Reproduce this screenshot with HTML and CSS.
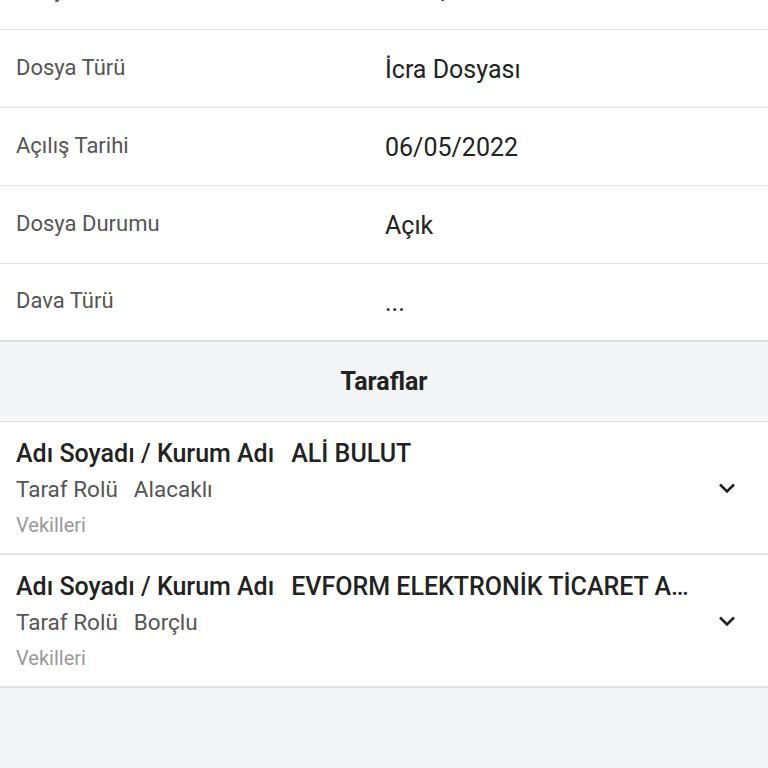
FILE: index.html
```html
<!DOCTYPE html>
<html lang="tr">
<head>
  <meta charset="UTF-8">
  <title>Dosya Detayı</title>
  <meta name="viewport" content="width=device-width,initial-scale=1">
  <link rel="stylesheet" href="styles.css">
</head>
<body>

  <!-- dosya bilgileri -->
  <div class="info-list">
    <div class="info-row">
      <span class="label">Dosya No</span>
      <span class="value">2022/1234</span>
    </div>
    <div class="info-row">
      <span class="label">Dosya Türü</span>
      <span class="value">İcra Dosyası</span>
    </div>
    <div class="info-row">
      <span class="label">Açılış Tarihi</span>
      <span class="value">06/05/2022</span>
    </div>
    <div class="info-row">
      <span class="label">Dosya Durumu</span>
      <span class="value">Açık</span>
    </div>
    <div class="info-row last">
      <span class="label">Dava Türü</span>
      <span class="value">...</span>
    </div>
  </div>

  <!-- taraflar -->
  <div class="section-title">Taraflar</div>

  <div class="party">
    <div class="party-info">
      <div class="party-name"><span>Adı Soyadı / Kurum Adı</span><b>ALİ BULUT</b></div>
      <div class="party-role"><span>Taraf Rolü</span>Alacaklı</div>
      <div class="party-lawyers">Vekilleri</div>
    </div>
    <svg class="chevron" width="24" height="24" viewBox="0 0 24 24"><path d="M5 8.5l7 7 7-7" fill="none" stroke="#222" stroke-width="2.6"/></svg>
  </div>

  <div class="party">
    <div class="party-info">
      <div class="party-name"><span>Adı Soyadı / Kurum Adı</span><b>EVFORM ELEKTRONİK TİCARET ANONİM ŞİRKETİ</b></div>
      <div class="party-role"><span>Taraf Rolü</span>Borçlu</div>
      <div class="party-lawyers">Vekilleri</div>
    </div>
    <svg class="chevron" width="24" height="24" viewBox="0 0 24 24"><path d="M5 8.5l7 7 7-7" fill="none" stroke="#222" stroke-width="2.6"/></svg>
  </div>

</body>
</html>
```

FILE: styles.css
```css
* { box-sizing: border-box; }
html, body {
  margin: 0;
  height: 100%;
}
body {
  font-family: Roboto, 'Noto Sans', sans-serif;
  background: #f4f5f7;
  color: #222;
  overflow: hidden;
}

/* -------- dosya bilgileri -------- */
.info-list {
  background: #fff;
  margin-top: -48px; /* sayfa aşağı kaydırılmış */
}
.info-row {
  display: flex;
  align-items: center;
  height: 78px;
  border-bottom: 1px solid #e3e3e3;
  padding: 0 16px;
}
.info-row.last {
  border-bottom: 2px solid #dcdcdc;
}
.label {
  width: 369px;
  font-size: 22px;
  color: #555;
  margin-bottom: 3px;
}
.value {
  font-size: 25px;
  color: #222;
  margin-top: 1px;
}

/* -------- taraflar -------- */
.section-title {
  height: 80px;
  line-height: 79px;
  text-align: center;
  font-size: 25px;
  font-weight: 700;
  color: #222;
  border-bottom: 1px solid #dedede;
}
.party {
  display: flex;
  align-items: center;
  background: #fff;
  height: 133px;
  padding: 0 16px;
  border-bottom: 2px solid #e2e2e2;
}
.party-info {
  flex: 1;
  min-width: 0;
  padding-right: 26px;
}
.party-name {
  font-size: 25px;
  font-weight: 500;
  line-height: 30px;
  white-space: nowrap;
  overflow: hidden;
  text-overflow: ellipsis;
  color: #222;
}
.party-name b {
  font-weight: 500;
  margin-left: 17px;
}
.party-role {
  font-size: 22.5px;
  line-height: 28px;
  color: #555;
  margin-top: 6px;
}
.party-role span {
  margin-right: 16px;
}
.party-lawyers {
  font-size: 20px;
  line-height: 24px;
  color: #999;
  margin-top: 10px;
}
.chevron {
  flex-shrink: 0;
  margin-right: 13px;
}
```
